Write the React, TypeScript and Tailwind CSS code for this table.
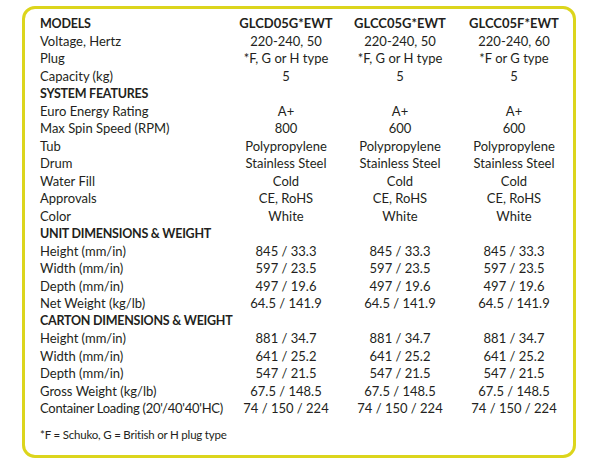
const models = ["GLCD05G*EWT", "GLCC05G*EWT", "GLCC05F*EWT"];

type Row = { label: string; values?: string[]; heading?: boolean };

const rows: Row[] = [
  { label: "Voltage, Hertz", values: ["220-240, 50", "220-240, 50", "220-240, 60"] },
  { label: "Plug", values: ["*F, G or H type", "*F, G or H type", "*F or G type"] },
  { label: "Capacity (kg)", values: ["5", "5", "5"] },
  { label: "SYSTEM FEATURES", heading: true },
  { label: "Euro Energy Rating", values: ["A+", "A+", "A+"] },
  { label: "Max Spin Speed (RPM)", values: ["800", "600", "600"] },
  { label: "Tub", values: ["Polypropylene", "Polypropylene", "Polypropylene"] },
  { label: "Drum", values: ["Stainless Steel", "Stainless Steel", "Stainless Steel"] },
  { label: "Water Fill", values: ["Cold", "Cold", "Cold"] },
  { label: "Approvals", values: ["CE, RoHS", "CE, RoHS", "CE, RoHS"] },
  { label: "Color", values: ["White", "White", "White"] },
  { label: "UNIT DIMENSIONS & WEIGHT", heading: true },
  { label: "Height (mm/in)", values: ["845 / 33.3", "845 / 33.3", "845 / 33.3"] },
  { label: "Width (mm/in)", values: ["597 / 23.5", "597 / 23.5", "597 / 23.5"] },
  { label: "Depth (mm/in)", values: ["497 / 19.6", "497 / 19.6", "497 / 19.6"] },
  { label: "Net Weight (kg/lb)", values: ["64.5 / 141.9", "64.5 / 141.9", "64.5 / 141.9"] },
  { label: "CARTON DIMENSIONS & WEIGHT", heading: true },
  { label: "Height (mm/in)", values: ["881 / 34.7", "881 / 34.7", "881 / 34.7"] },
  { label: "Width (mm/in)", values: ["641 / 25.2", "641 / 25.2", "641 / 25.2"] },
  { label: "Depth (mm/in)", values: ["547 / 21.5", "547 / 21.5", "547 / 21.5"] },
  { label: "Gross Weight (kg/lb)", values: ["67.5 / 148.5", "67.5 / 148.5", "67.5 / 148.5"] },
  { label: "Container Loading (20'/40'40'HC)", values: ["74 / 150 / 224", "74 / 150 / 224", "74 / 150 / 224"] },
];

export default function App() {
  return (
    <div className="w-[600px] h-[464px] bg-white pt-[6px] pl-[22px] font-['Lato','Liberation_Sans',sans-serif] text-[#231f20]">
      <div className="w-[554px] h-[452px] rounded-[13px] border-[3px] border-[#dcd51c] pl-[15px] pt-[6px]">
        <div className="grid grid-cols-[189px_114px_114px_114px] auto-rows-[17.5px] items-center text-[13px] leading-none whitespace-nowrap">
          <div className="font-bold text-[12.5px] tracking-[-0.2px]">MODELS</div>
          {models.map((m) => (
            <div key={m} className="text-center font-bold text-[13px]">
              {m}
            </div>
          ))}
          {rows.map((r, i) =>
            r.heading ? (
              <div key={i} className="col-span-4 font-bold text-[12.5px] tracking-[-0.25px]">
                {r.label}
              </div>
            ) : (
              [
                <div key={i + "l"} className={i === rows.length - 1 ? "tracking-[-0.25px]" : ""}>
                  {r.label}
                </div>,
                ...(r.values ?? []).map((v, j) => (
                  <div key={i + "v" + j} className="text-center">
                    {v}
                  </div>
                )),
              ]
            )
          )}
        </div>
        <p className="mt-[11px] text-[11.5px] tracking-[-0.2px] leading-none">*F = Schuko, G = British or H plug type</p>
      </div>
    </div>
  );
}
